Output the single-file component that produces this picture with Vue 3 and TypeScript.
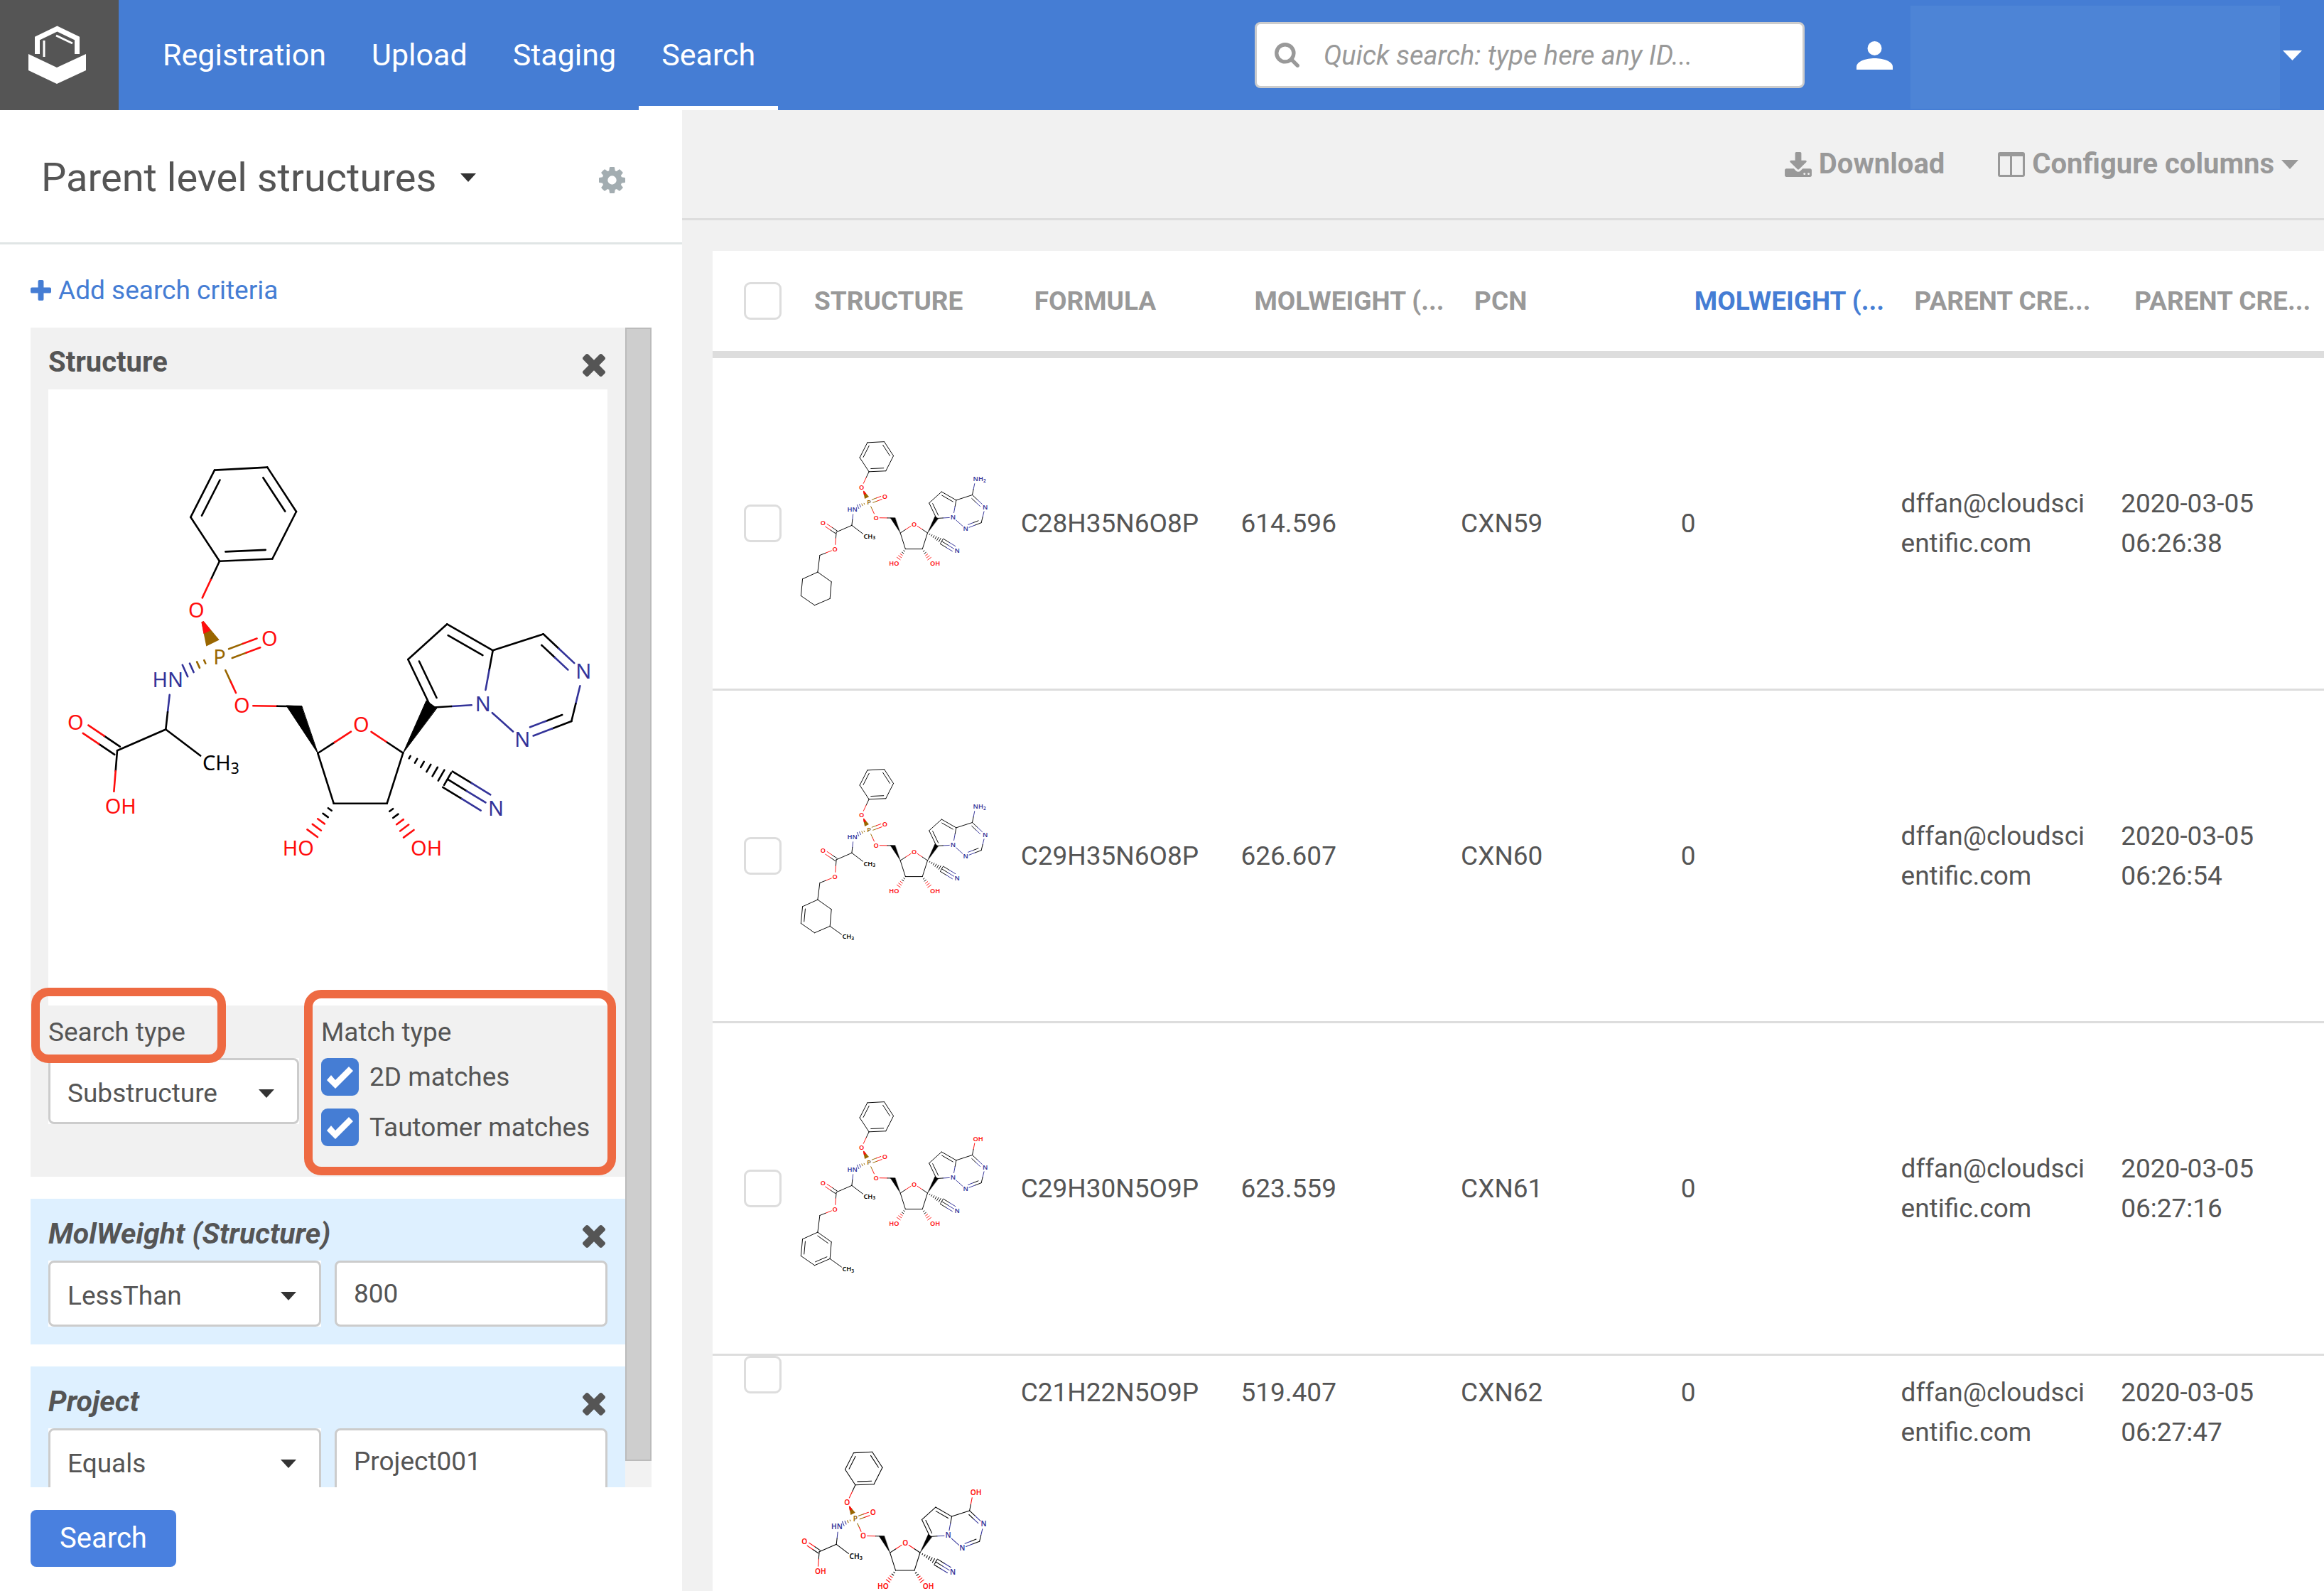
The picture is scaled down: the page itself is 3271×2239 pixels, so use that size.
<script setup lang="ts">
import { computed, defineComponent, h, ref, type PropType, type VNode } from 'vue'

/* ---------- small glyphs ---------- */

const TIMES =
  'M1490 1322q0 40-28 68l-136 136q-28 28-68 28t-68-28l-294-294-294 294q-28 28-68 28t-68-28l-136-136q-28-28-28-68t28-68l294-294-294-294q-28-28-28-68t28-68l136-136q28-28 68-28t68 28l294 294 294-294q28-28 68-28t68 28l136 136q28 28 28 68t-28 68l-294 294 294 294q28 28 28 68z'

/* ---------- structure drawings ---------- */

type Point = [number, number]
interface Atom {
  at: Point
  label?: string
  sub?: string
  anchor?: 'start' | 'end'
  shift?: number
}
interface Bond {
  a: string
  b: string
  kind?: 'double' | 'triple'
  ring?: Point
}

const RED = '#ff0d0d'
const BLUE = '#333399'
const BROWN = '#996600'

const phenyl: Point = [343, 724]
const pyrrole: Point = [637, 942]
const triazine: Point = [750, 967]
const tail: Point = [76, 1306]

const coreAtoms: Record<string, Atom> = {
  p1: { at: [302, 661.6] },
  p2: { at: [376.3, 657.6] },
  p3: { at: [417, 720] },
  p4: { at: [383.3, 786.5] },
  p5: { at: [309, 789.8] },
  p6: { at: [268.3, 727.8] },
  o1: { at: [276.3, 859.2], label: 'O' },
  p: { at: [309, 925.3], label: 'P' },
  o2: { at: [379.3, 899.2], label: 'O' },
  n: { at: [241, 957], label: 'HN', anchor: 'end', shift: 17 },
  o3: { at: [340.3, 993], label: 'O' },
  c5: { at: [424, 994.3] },
  c4: { at: [447.3, 1060] },
  ca: { at: [233.3, 1026.5] },
  me: { at: [296, 1074], label: 'CH', sub: '3', anchor: 'start' },
  cc: { at: [165, 1056.3] },
  od: { at: [106.3, 1016.7], label: 'O' },
  or: { at: [508.3, 1020.3], label: 'O' },
  c1: { at: [567.3, 1059.7] },
  c2: { at: [544.7, 1130.7] },
  c3: { at: [469.7, 1130.7] },
  h3: { at: [431, 1194.3], label: 'HO', anchor: 'end' },
  h2: { at: [589, 1194.3], label: 'OH', anchor: 'start' },
  cn: { at: [630, 1096.7] },
  nn: { at: [698, 1138.3], label: 'N' },
  q7: { at: [606.7, 995.7] },
  q6: { at: [574.3, 928] },
  q5: { at: [629.3, 878.3] },
  q4: { at: [693.7, 915.3] },
  qn: { at: [679.7, 991.3], label: 'N' },
  t1: { at: [764.7, 892.3] },
  t2: { at: [821.3, 945.3], label: 'N' },
  t3: { at: [804.3, 1015] },
  t4: { at: [735.3, 1041.3], label: 'N' },
}

const coreBonds: Bond[] = [
  { a: 'p6', b: 'p1', ring: phenyl },
  { a: 'p1', b: 'p2' },
  { a: 'p2', b: 'p3', ring: phenyl },
  { a: 'p3', b: 'p4' },
  { a: 'p4', b: 'p5', ring: phenyl },
  { a: 'p5', b: 'p6' },
  { a: 'p5', b: 'o1' },
  { a: 'p', b: 'o2', kind: 'double' },
  { a: 'p', b: 'o3' },
  { a: 'o3', b: 'c5' },
  { a: 'n', b: 'ca' },
  { a: 'ca', b: 'me' },
  { a: 'ca', b: 'cc' },
  { a: 'cc', b: 'od', kind: 'double' },
  { a: 'cc', b: 'oh' },
  { a: 'c4', b: 'or' },
  { a: 'or', b: 'c1' },
  { a: 'c1', b: 'c2' },
  { a: 'c2', b: 'c3' },
  { a: 'c3', b: 'c4' },
  { a: 'cn', b: 'nn', kind: 'triple' },
  { a: 'q7', b: 'q6', ring: pyrrole },
  { a: 'q6', b: 'q5' },
  { a: 'q5', b: 'q4', ring: pyrrole },
  { a: 'q4', b: 'qn' },
  { a: 'qn', b: 'q7' },
  { a: 'q4', b: 't1' },
  { a: 't1', b: 't2', ring: triazine },
  { a: 't2', b: 't3' },
  { a: 't3', b: 't4', ring: triazine },
  { a: 't4', b: 'qn' },
]

const acid: Record<string, Atom> = { oh: { at: [158.7, 1134.7], label: 'OH', anchor: 'start' } }

const ester: Record<string, Atom> = {
  oh: { at: [159, 1132], label: 'O' },
  e0: { at: [92.2, 1158.5] },
  a1: { at: [82.8, 1232.6] },
  a2: { at: [143.3, 1275.4] },
  a3: { at: [137, 1349.5] },
  a4: { at: [69.2, 1378.7] },
  a5: { at: [9, 1337] },
  a6: { at: [16, 1262.9] },
}
const tailMethyl: Record<string, Atom> = {
  am: { at: [202, 1396], label: 'CH', sub: '3', anchor: 'start' },
}
const amine: Record<string, Atom> = {
  top: { at: [779, 822.4], label: 'NH', sub: '2', anchor: 'start' },
}
const hydroxyl: Record<string, Atom> = {
  top: { at: [779, 820], label: 'OH', anchor: 'start' },
}
const topBond: Bond[] = [{ a: 't1', b: 'top' }]

function tailBonds(doubles: string[], methyl: boolean): Bond[] {
  const ring = ['a1', 'a2', 'a3', 'a4', 'a5', 'a6']
  const bonds: Bond[] = [
    { a: 'oh', b: 'e0' },
    { a: 'e0', b: 'a1' },
  ]
  ring.forEach((a, i) => {
    const b = ring[(i + 1) % 6]
    bonds.push({ a, b, ring: doubles.includes(a) ? tail : undefined })
  })
  if (methyl) bonds.push({ a: 'a3', b: 'am' })
  return bonds
}

function colourOf(atom: Atom): string {
  const label = atom.label ?? ''
  if (label.includes('N')) return BLUE
  if (label.includes('O')) return RED
  if (label.includes('P')) return BROWN
  return '#000'
}

const Molecule = defineComponent({
  props: {
    atoms: { type: Object as PropType<Record<string, Atom>>, required: true },
    bonds: { type: Array as PropType<Bond[]>, required: true },
    box: { type: String, required: true },
    stroke: { type: Number, default: 2.6 },
    weight: { type: Number, default: 400 },
    title: { type: String, required: true },
  },
  setup(props) {
    const drawn = computed<VNode[]>(() => {
      const out: VNode[] = []
      const line = (x1: number, y1: number, x2: number, y2: number, c: string) =>
        out.push(h('line', { x1, y1, x2, y2, stroke: c }))
      const halves = (x1: number, y1: number, x2: number, y2: number, c1: string, c2: string) => {
        if (c1 === c2) {
          line(x1, y1, x2, y2, c1)
          return
        }
        const mx = (x1 + x2) / 2
        const my = (y1 + y2) / 2
        line(x1, y1, mx, my, c1)
        line(mx, my, x2, y2, c2)
      }
      const hashes = (from: Point, to: Point, n: number, w0: number, w1: number, split: number, c1: string, c2: string) => {
        const dx = to[0] - from[0]
        const dy = to[1] - from[1]
        const len = Math.hypot(dx, dy)
        for (let i = 0; i < n; i++) {
          const f = i / (n - 1)
          const w = (w0 + (w1 - w0) * f) / 2
          const x = from[0] + dx * f
          const y = from[1] + dy * f
          const ox = (-dy / len) * w
          const oy = (dx / len) * w
          line(x - ox, y - oy, x + ox, y + oy, i < split ? c1 : c2)
        }
      }
      for (const bond of props.bonds) {
        const A = props.atoms[bond.a]
        const B = props.atoms[bond.b]
        const dx = B.at[0] - A.at[0]
        const dy = B.at[1] - A.at[1]
        const len = Math.hypot(dx, dy)
        const ux = dx / len
        const uy = dy / len
        /* labels keep an oval of clear space around them */
        const clear = 1 / Math.hypot(ux / 16, uy / 21)
        const ta = A.label ? clear : 0
        const tb = B.label ? clear : 0
        const ca = colourOf(A)
        const cb = colourOf(B)
        const seg = (off: number, sa: number, sb: number) =>
          halves(
            A.at[0] + ux * sa - uy * off,
            A.at[1] + uy * sa + ux * off,
            B.at[0] - ux * sb - uy * off,
            B.at[1] - uy * sb + ux * off,
            ca,
            cb,
          )
        if (bond.kind === 'double') {
          seg(-6.8, ta, tb)
          seg(6.8, ta, tb)
        } else if (bond.kind === 'triple') {
          seg(-13, ta, tb)
          seg(0, ta, tb)
          seg(13, ta, tb)
        } else {
          seg(0, ta, tb)
          if (bond.ring) {
            const side = (bond.ring[0] - A.at[0]) * -uy + (bond.ring[1] - A.at[1]) * ux
            seg(side > 0 ? 13 : -13, Math.max(ta, 9), Math.max(tb, 9))
          }
        }
      }
      out.push(h('polygon', { points: '447.3,1060 403,993 424.6,994', fill: '#000', stroke: '#000', 'stroke-width': 1 }))
      out.push(h('polygon', { points: '567.3,1059.7 600,986 614.6,996.5', fill: '#000', stroke: '#000', 'stroke-width': 1 }))
      out.push(h('polygon', { points: '283.5,875.5 286.5,874 308.7,900.4 290.3,909.4', fill: BROWN }))
      out.push(h('polygon', { points: '283.5,875.5 286.5,874 297,887 286.5,892', fill: RED }))
      hashes([288.3, 931.4], [260.5, 944], 4, 5, 18, 2, BROWN, BLUE)
      hashes([464.3, 1139], [439.7, 1172.7], 5, 6, 18, 2, '#000', RED)
      hashes([550.7, 1140], [575.3, 1173.3], 5, 6, 18, 2, '#000', RED)
      hashes([576.7, 1065.7], [630, 1096.3], 7, 4, 20, 7, '#000', '#000')
      for (const atom of Object.values(props.atoms)) {
        if (!atom.label) continue
        const side = atom.anchor === 'end' ? 11 : atom.anchor === 'start' ? -11 : 0
        out.push(
          h(
            'text',
            {
              x: atom.at[0] + (atom.shift ?? side),
              y: atom.at[1] + 10,
              'text-anchor': atom.anchor ?? 'middle',
              'font-size': 29,
              'font-weight': props.weight,
              fill: colourOf(atom),
            },
            atom.sub ? [atom.label, h('tspan', { dy: 5, 'font-size': 21 }, atom.sub)] : atom.label,
          ),
        )
      }
      return out
    })
    return () =>
      h(
        'svg',
        {
          viewBox: props.box,
          role: 'img',
          'aria-label': props.title,
          'stroke-width': props.stroke,
          'stroke-linecap': 'round',
          'font-family': '"Noto Sans", "Open Sans", sans-serif',
        },
        [h('g', drawn.value)],
      )
  },
})

const query = { atoms: { ...coreAtoms, ...acid }, bonds: coreBonds }

/* ---------- page data ---------- */

const navItems = ['Registration', 'Upload', 'Staging', 'Search']
const columns = ['STRUCTURE', 'FORMULA', 'MOLWEIGHT (...', 'PCN', 'MOLWEIGHT (...', 'PARENT CRE...', 'PARENT CRE...']
const sortedColumn = 4

const rows = [
  {
    formula: 'C28H35N6O8P', weight: '614.596', pcn: 'CXN59', time: '06:26:38',
    box: '8 640 820 756',
    atoms: { ...coreAtoms, ...ester, ...amine },
    bonds: [...coreBonds, ...topBond, ...tailBonds([], false)],
  },
  {
    formula: 'C29H35N6O8P', weight: '626.607', pcn: 'CXN60', time: '06:26:54',
    box: '8 640 820 796',
    atoms: { ...coreAtoms, ...ester, ...tailMethyl, ...amine },
    bonds: [...coreBonds, ...topBond, ...tailBonds(['a5'], true)],
  },
  {
    formula: 'C29H30N5O9P', weight: '623.559', pcn: 'CXN61', time: '06:27:16',
    box: '8 640 820 796',
    atoms: { ...coreAtoms, ...ester, ...tailMethyl, ...hydroxyl },
    bonds: [...coreBonds, ...topBond, ...tailBonds(['a1', 'a3', 'a5'], true)],
  },
  {
    formula: 'C21H22N5O9P', weight: '519.407', pcn: 'CXN62', time: '06:27:47',
    box: '91 640 742 588',
    atoms: { ...coreAtoms, ...acid, ...hydroxyl },
    bonds: [...coreBonds, ...topBond],
  },
]

const searchType = ref('Substructure')
const matches = ref([
  { label: '2D matches', on: true },
  { label: 'Tautomer matches', on: true },
])
const criteria = ref([
  { id: 'molweight', name: 'MolWeight (Structure)', op: 'LessThan', value: '800' },
  { id: 'project', name: 'Project', op: 'Equals', value: 'Project001' },
])
</script>

<template>
  <div class="app">
    <header class="topbar">
      <a class="logo" href="#" aria-label="Home">
        <svg viewBox="0 0 167 154" width="167" height="154" fill="none" stroke="#fff">
          <path d="M40 76l40 19 41-19v23l-41 19-40-19z" fill="#fff" stroke="none" />
          <path d="M52.500 76V54L80.500 40.500 108.500 54V76" stroke-width="7" />
          <path d="M62 57v23M79 50l23 11" stroke-width="3" />
        </svg>
      </a>
      <nav class="nav">
        <a v-for="item in navItems" :key="item" href="#" :class="{ active: item === 'Search' }">{{ item }}</a>
      </nav>
      <label class="quick">
        <svg viewBox="64 128 1664 1664" width="35" height="35" fill="#999">
          <path d="M1216 832q0-185-131.500-316.500t-316.500-131.500-316.500 131.500-131.500 316.500 131.500 316.500 316.500 131.500 316.500-131.500 131.500-316.500zm512 832q0 52-38 90t-90 38q-54 0-90-38l-343-342q-179 124-399 124-143 0-273.500-55.500t-225-150-150-225-55.500-273.500 55.500-273.500 150-225 225-150 273.500-55.500 273.500 55.500 225 150 150 225 55.500 273.500q0 220-124 399l343 343q37 37 37 90z" />
        </svg>
        <input type="text" aria-label="Quick search" placeholder="Quick search: type here any ID..." />
      </label>
      <button class="user" type="button" aria-label="Account">
        <svg viewBox="0 0 51 40" width="51" height="40" fill="#fff">
          <circle cx="25.500" cy="10" r="10" />
          <path d="M0 40v-4c0-8 14-12 25.500-12S51 28 51 36v4z" />
        </svg>
        <span class="account"></span>
        <svg viewBox="0 0 27 14" width="27" height="14" fill="#fff"><path d="M0 0h27L13.500 14z" /></svg>
      </button>
    </header>

    <aside class="sidebar">
      <div class="side-head">
        <button class="level" type="button">
          Parent level structures
          <svg viewBox="0 0 22 12" width="22" height="12" fill="#333"><path d="M0 0h22L11 12z" /></svg>
        </button>
        <button class="icon" type="button" aria-label="Settings">
          <svg viewBox="128 128 1536 1536" width="37" height="37" fill="#a3adb1">
            <path d="M1152 896q0-106-75-181t-181-75-181 75-75 181 75 181 181 75 181-75 75-181zm512-109v222q0 12-8 23t-20 13l-185 28q-19 54-39 91 35 50 107 138 10 12 10 25t-9 23q-27 37-99 108t-94 71q-12 0-26-9l-138-108q-44 23-91 38-16 136-29 186-7 28-36 28h-222q-14 0-24.500-8.500t-11.500-21.500l-28-184q-49-16-90-37l-141 107q-10 9-25 9-14 0-25-11-126-114-165-168-7-10-7-23 0-12 8-23 15-21 51-66.500t54-70.500q-27-50-41-99l-183-27q-13-2-21-12.500t-8-23.500v-222q0-12 8-23t19-13l186-28q14-46 39-92-40-57-107-138-10-12-10-24 0-10 9-23 26-36 98.500-107.500t94.500-71.500q13 0 26 10l138 107q44-23 91-38 16-136 29-186 7-28 36-28h222q14 0 24.500 8.500t11.500 21.500l28 184q49 16 90 37l142-107q9-9 24-9 13 0 25 10 129 119 165 170 7 8 7 22 0 12-8 23-15 21-51 66.500t-54 70.500q26 50 41 98l183 28q13 2 21 12.500t8 23.500z" />
          </svg>
        </button>
      </div>

      <a class="add" href="#">
        <svg viewBox="192 128 1408 1408" width="29" height="29" fill="#457dd4">
          <path d="M1600 736v192q0 40-28 68t-68 28h-416v416q0 40-28 68t-68 28h-192q-40 0-68-28t-28-68v-416h-416q-40 0-68-28t-28-68v-192q0-40 28-68t68-28h416v-416q0-40 28-68t68-28h192q40 0 68 28t28 68v416h416q40 0 68 28t28 68z" />
        </svg>
        Add search criteria
      </a>

      <div class="scroller">
        <div class="criteria">
          <section class="card structure">
            <div class="card-head">
              <h2>Structure</h2>
              <button class="icon" type="button" aria-label="Remove Structure">
                <svg viewBox="302 366 1188 1188" width="32" height="32" fill="#555"><path :d="TIMES" /></svg>
              </button>
            </div>
            <div class="canvas">
              <Molecule v-bind="query" box="68 548 787 867" title="Query structure" />
            </div>
            <div class="options">
              <div class="search-type">
                <label class="caption" for="search-type">Search type<span class="mark"></span></label>
                <span class="select">
                  <select id="search-type" v-model="searchType"><option>Substructure</option></select>
                  <svg viewBox="0 0 22 12" width="22" height="12" fill="#333"><path d="M0 0h22L11 12z" /></svg>
                </span>
              </div>
              <div class="match-type" role="group" aria-labelledby="match-type">
                <div id="match-type" class="caption">Match type</div>
                <label v-for="m in matches" :key="m.label" class="tick">
                  <span class="tickbox">
                    <input v-model="m.on" type="checkbox" />
                    <svg v-if="m.on" viewBox="0 0 53 53" width="53" height="53" fill="#fff">
                      <path d="M8 31l6-7 6 7 19-19 6 6-25 25z" />
                    </svg>
                  </span>
                  {{ m.label }}
                </label>
                <span class="mark"></span>
              </div>
            </div>
          </section>

          <section v-for="c in criteria" :key="c.id" class="card field">
            <div class="card-head">
              <h2>{{ c.name }}</h2>
              <button class="icon" type="button" :aria-label="'Remove ' + c.name">
                <svg viewBox="302 366 1188 1188" width="32" height="32" fill="#555"><path :d="TIMES" /></svg>
              </button>
            </div>
            <div class="pair">
              <span class="select">
                <select v-model="c.op" :aria-label="c.name + ' operator'"><option>{{ c.op }}</option></select>
                <svg viewBox="0 0 22 12" width="22" height="12" fill="#333"><path d="M0 0h22L11 12z" /></svg>
              </span>
              <input v-model="c.value" class="value" type="text" :aria-label="c.name + ' value'" />
            </div>
          </section>
        </div>
        <div class="track"><div class="thumb"></div></div>
      </div>

      <div class="side-foot">
        <button class="primary" type="button">Search</button>
      </div>
    </aside>

    <main class="content">
      <div class="toolbar">
        <button type="button">
          <svg viewBox="64 0 1664 1536" width="38" height="35" fill="#999">
            <path d="M1344 1344q0-26-19-45t-45-19-45 19-19 45 19 45 45 19 45-19 19-45zm256 0q0-26-19-45t-45-19-45 19-19 45 19 45 45 19 45-19 19-45zm128-224v320q0 40-28 68t-68 28h-1472q-40 0-68-28t-28-68v-320q0-40 28-68t68-28h465l135 136q58 56 136 56t136-56l136-136h464q40 0 68 28t28 68zm-325-569q17 41-14 70l-448 448q-18 19-45 19t-45-19l-448-448q-31-29-14-70 17-39 59-39h256v-448q0-26 19-45t45-19h256q26 0 45 19t19 45v448h256q42 0 59 39z" />
          </svg>
          Download
        </button>
        <button type="button">
          <svg viewBox="0 0 38 35" width="38" height="35" fill="#999" fill-rule="evenodd">
            <path d="M3 0h32a3 3 0 0 1 3 3v29a3 3 0 0 1-3 3H3a3 3 0 0 1-3-3V3a3 3 0 0 1 3-3zM3 6v26h14V6zM20 6v26h15V6z" />
          </svg>
          Configure columns
          <svg viewBox="0 0 24 13" width="24" height="13" fill="#999"><path d="M0 0h24L12 13z" /></svg>
        </button>
      </div>

      <table class="grid">
        <thead>
          <tr>
            <th class="pick"><input type="checkbox" aria-label="Select all rows" /></th>
            <th v-for="(c, i) in columns" :key="i" scope="col" :class="{ sorted: i === sortedColumn }">{{ c }}</th>
          </tr>
        </thead>
        <tbody>
          <tr v-for="r in rows" :key="r.pcn">
            <td class="pick"><input type="checkbox" :aria-label="'Select ' + r.pcn" /></td>
            <td class="drawing">
              <Molecule :atoms="r.atoms" :bonds="r.bonds" :box="r.box" :stroke="3" :weight="600" :title="r.formula" />
            </td>
            <td>{{ r.formula }}</td>
            <td>{{ r.weight }}</td>
            <td>{{ r.pcn }}</td>
            <td>0</td>
            <td>dffan@cloudscientific.com</td>
            <td>2020-03-05 {{ r.time }}</td>
          </tr>
        </tbody>
      </table>
    </main>
  </div>
</template>

<style>
body {
  margin: 0;
}
</style>

<style scoped>
* {
  box-sizing: border-box;
}
.app {
  display: grid;
  grid-template: 155px minmax(0, 1fr) / 960px minmax(0, 1fr);
  height: 100vh;
  overflow: hidden;
  background: #fff;
  color: #555;
  font: 37px/56px Roboto, "Liberation Sans", sans-serif;
}
button,
input,
select {
  margin: 0;
  font: inherit;
  color: inherit;
}
button {
  padding: 0;
  border: 0;
  background: none;
}
svg {
  display: block;
  flex: none;
}
a {
  text-decoration: none;
}

/* top bar */
.topbar {
  grid-column: 1 / -1;
  display: flex;
  align-items: center;
  background: #457dd4;
  color: #fff;
}
.logo {
  align-self: stretch;
  width: 167px;
  background: #555;
}
.nav {
  display: flex;
  align-self: stretch;
  margin-left: 30px;
}
.nav a {
  display: flex;
  align-items: center;
  padding: 4px 32px 0;
  border-bottom: 6px solid transparent;
  color: #fff;
  font-size: 43px;
}
.nav a.active {
  border-color: #fff;
}
.quick {
  display: flex;
  align-items: center;
  gap: 34px;
  width: 774px;
  height: 93px;
  margin-left: auto;
  padding: 0 25px;
  border: 3px solid #ccc;
  border-radius: 8px;
  background: #fff;
}
.quick input {
  flex: 1;
  min-width: 0;
  padding: 0;
  border: 0;
  background: none;
  font-size: 38px;
  font-style: italic;
}
.quick input::placeholder {
  color: #999;
}
.user {
  display: flex;
  align-items: center;
  align-self: stretch;
  margin: 0 31px 0 73px;
}
.account {
  width: 520px;
  height: 145px;
  margin: 6px 4px 0 25px;
  background: #4d84d6;
}

/* sidebar */
.sidebar {
  display: flex;
  flex-direction: column;
  min-height: 0;
}
.side-head {
  display: flex;
  align-items: center;
  justify-content: space-between;
  height: 189px;
  padding: 4px 80px 0 58px;
  border-bottom: 3px solid #e0e5e5;
}
.side-head .icon {
  padding-top: 6px;
}
.level {
  display: flex;
  align-items: center;
  gap: 34px;
  font-size: 56px;
}
.add {
  display: flex;
  align-items: center;
  gap: 10px;
  height: 117px;
  padding: 12px 43px 0;
  color: #457dd4;
}
.scroller {
  display: flex;
  flex: 1;
  min-height: 0;
  margin: 0 43px;
  overflow: hidden;
}
.criteria {
  flex: 1;
  min-width: 0;
}
.track {
  display: flex;
  width: 37px;
  padding-bottom: 37px;
  background: #f2f2f2;
}
.thumb {
  flex: 1;
  border: 2px solid #bbb;
  background: #cecece;
}
.card {
  padding: 0 25px;
}
.card + .card {
  margin-top: 31px;
}
.structure {
  padding-bottom: 43px;
  background: #f1f1f1;
}
.field {
  padding-bottom: 25px;
  background: #def0ff;
}
.card-head {
  display: flex;
  align-items: center;
  justify-content: space-between;
  height: 87px;
  padding: 18px 3px 0 0;
}
h2 {
  margin: 0;
  padding-bottom: 8px;
  font-size: 40px;
  font-weight: 700;
}
.field h2 {
  font-size: 41px;
  font-style: italic;
}
.canvas {
  background: #fff;
}
.canvas svg {
  width: 100%;
}
.options {
  display: flex;
  gap: 31px;
  padding-top: 13px;
}
.search-type {
  width: 353px;
}
.caption {
  display: block;
  position: relative;
  margin-bottom: 11px;
  line-height: 50px;
}
.match-type {
  position: relative;
  display: flex;
  flex: 1;
  flex-direction: column;
}
.mark {
  position: absolute;
  z-index: 1;
  border: 12px solid #ee6a42;
  border-radius: 24px;
  pointer-events: none;
}
.search-type .mark {
  top: -38px;
  left: -24px;
  width: 274px;
  height: 106px;
}
.match-type .mark {
  inset: -35px -12px -41px -24px;
}
.tick {
  display: flex;
  align-items: center;
  gap: 15px;
  height: 53px;
}
.tick + .tick {
  margin-top: 18px;
}
.tickbox {
  display: grid;
}
.tickbox > * {
  grid-area: 1 / 1;
  pointer-events: none;
}
input[type="checkbox"] {
  display: block;
  width: 53px;
  height: 53px;
  border: 3px solid #ddd;
  border-radius: 9px;
  background: #fff;
  appearance: none;
}
input[type="checkbox"]:checked {
  border-color: #457dd4;
  background: #457dd4;
}
.select {
  display: grid;
  align-items: center;
  background: #fff;
}
.select > * {
  grid-area: 1 / 1;
}
.select svg {
  justify-self: end;
  margin: 6px 35px 0 0;
  pointer-events: none;
}
select,
.value {
  width: 100%;
  height: 93px;
  padding: 0 24px;
  border: 3px solid #ccc;
  border-radius: 8px;
  background: #fff;
  appearance: none;
}
select {
  padding-top: 6px;
}
.pair {
  display: grid;
  grid-template-columns: 1fr 1fr;
  gap: 19px;
}
.side-foot {
  padding: 32px 43px 34px;
}
.primary {
  height: 80px;
  padding: 0 41px;
  border-radius: 8px;
  background: #4980df;
  color: #fff;
  font-size: 40px;
}

/* results */
.content {
  min-height: 0;
  overflow: hidden;
  background: #f1f1f1;
}
.toolbar {
  display: flex;
  justify-content: flex-end;
  gap: 75px;
  height: 155px;
  padding-right: 36px;
  border-bottom: 3px solid #ddd;
  color: #999;
  font-size: 40px;
  font-weight: 700;
}
.toolbar button {
  display: flex;
  align-items: center;
  gap: 10px;
}
.grid {
  width: calc(100% - 43px);
  margin: 43px 0 0 43px;
  border-spacing: 0;
  table-layout: fixed;
  background: #fff;
}
th {
  height: 148px;
  padding: 0 0 0 43px;
  border-bottom: 7px solid #ddd;
  color: #999;
  font-weight: 700;
  text-align: left;
  white-space: nowrap;
}
th.sorted {
  color: #457dd4;
}
td {
  height: 468px;
  padding: 0 24px;
  border-top: 3px solid #ddd;
  overflow-wrap: anywhere;
}
.pick {
  width: 100px;
  padding: 0 0 0 44px;
}
.drawing svg {
  width: 100%;
  overflow: visible;
}
tbody tr:last-child td:not(.drawing) {
  padding-top: 24px;
  vertical-align: top;
}
tbody tr:last-child td.pick {
  padding-top: 0;
}
</style>
